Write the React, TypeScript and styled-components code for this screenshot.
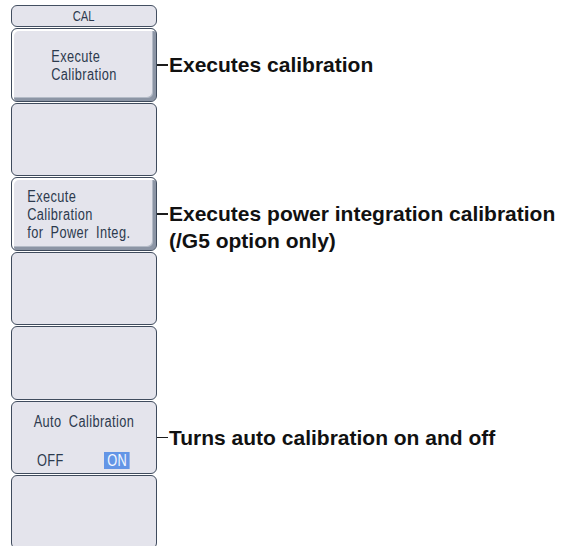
import React from 'react';
import styled, { createGlobalStyle, css } from 'styled-components';

const GlobalStyle = createGlobalStyle`
	body {
		margin: 0;
		background: #ffffff;
	}
`;

// the instrument font is tall and narrow, squeeze Arial to get close
const keyFont = `'Liberation Sans', Arial, sans-serif`;
const squeeze = 'scaleX(0.8)';

const Page = styled.div`
	display: flex;
	flex-direction: column;
	gap: 1px;
	padding: 5px 0 0 11px;
	height: 546px;
	box-sizing: border-box;
	overflow: hidden;
`;

const Row = styled.div`
	display: flex;
	flex-direction: row;
	align-items: center;
	flex-shrink: 0;
	height: 73.5px;
`;

const MenuTitle = styled.div`
	width: 146px;
	height: 22px;
	box-sizing: border-box;
	border: 1.5px solid #434f61;
	border-radius: 6px;
	background: #e4e4ec;
	color: #2c3a4e;
	font-family: ${keyFont};
	font-size: 15px;
	line-height: 19px;
	text-align: center;
	flex-shrink: 0;
	span {
		display: inline-block;
		transform: scaleX(0.75);
	}
`;

const SoftKey = styled.div<{ $raised?: boolean }>`
	width: 146px;
	height: 100%;
	box-sizing: border-box;
	border: 1.5px solid #3f4b5d;
	border-radius: 6px;
	background: #e4e4ec;
	color: #2c3a4e;
	font-family: ${keyFont};
	font-size: 16px;
	letter-spacing: 0.5px;
	word-spacing: 4px;
	line-height: 18px;
	display: flex;
	flex-direction: column;
	white-space: nowrap;
	${(p) =>
		p.$raised &&
		css`
			box-shadow: inset 2px 2px 0 #ffffff, inset -3px -3px 0 #8c95a5, inset -4px -4px 0 #b4bbc7;
		`}
`;

const CenteredLabel = styled.div`
	margin: auto;
	padding-top: 3px;
	text-align: left;
	transform: ${squeeze};
`;

const LeftLabel = styled.div`
	padding: 10px 0 0 19px;
	text-align: left;
	transform: ${squeeze};
	transform-origin: left center;
`;

const ToggleTitle = styled.div`
	text-align: center;
	margin-top: 11px;
	transform: ${squeeze};
`;

const ToggleRow = styled.div`
	display: flex;
	flex-direction: row;
	align-items: center;
	margin-top: 21px;
	padding-left: 25px;
`;

const ToggleOption = styled.span<{ $active?: boolean }>`
	display: inline-block;
	width: ${(p) => (p.$active ? 'auto' : '67px')};
	transform: ${squeeze};
	transform-origin: left center;
	span {
		line-height: 16px;
		${(p) =>
			p.$active &&
			css`
				padding: 0 3px 0 4px;
				background: #6395e6;
				color: #f4f8ff;
			`}
	}
`;

const Callout = styled.div<{ $lines?: number }>`
	display: flex;
	flex-direction: row;
	align-items: flex-start;
	margin-top: ${(p) => ((p.$lines || 1) - 1) * 27}px;
`;

const Leader = styled.div`
	width: 11px;
	height: 1.5px;
	background: #1c1c1c;
	margin-top: 13px;
	flex-shrink: 0;
`;

const Note = styled.div`
	font-family: 'Liberation Sans', Arial, sans-serif;
	font-weight: bold;
	font-size: 21px;
	line-height: 27px;
	color: #111111;
	white-space: nowrap;
	padding-left: 1px;
`;

const App: React.FC = () => {
	return (
		<Page>
			<GlobalStyle />
			<MenuTitle>
				<span>CAL</span>
			</MenuTitle>
			<Row>
				<SoftKey $raised>
					<CenteredLabel>
						Execute
						<br />
						Calibration
					</CenteredLabel>
				</SoftKey>
				<Callout>
					<Leader />
					<Note>Executes calibration</Note>
				</Callout>
			</Row>
			<Row>
				<SoftKey />
			</Row>
			<Row>
				<SoftKey $raised>
					<LeftLabel>
						Execute
						<br />
						Calibration
						<br />
						for Power Integ.
					</LeftLabel>
				</SoftKey>
				<Callout $lines={2}>
					<Leader />
					<Note>
						Executes power integration calibration
						<br />
						(/G5 option only)
					</Note>
				</Callout>
			</Row>
			<Row>
				<SoftKey />
			</Row>
			<Row>
				<SoftKey />
			</Row>
			<Row>
				<SoftKey>
					<ToggleTitle>Auto Calibration</ToggleTitle>
					<ToggleRow>
						<ToggleOption>
							<span>OFF</span>
						</ToggleOption>
						<ToggleOption $active>
							<span>ON</span>
						</ToggleOption>
					</ToggleRow>
				</SoftKey>
				<Callout>
					<Leader />
					<Note>Turns auto calibration on and off</Note>
				</Callout>
			</Row>
			<Row>
				<SoftKey />
			</Row>
		</Page>
	);
};

export default App;
